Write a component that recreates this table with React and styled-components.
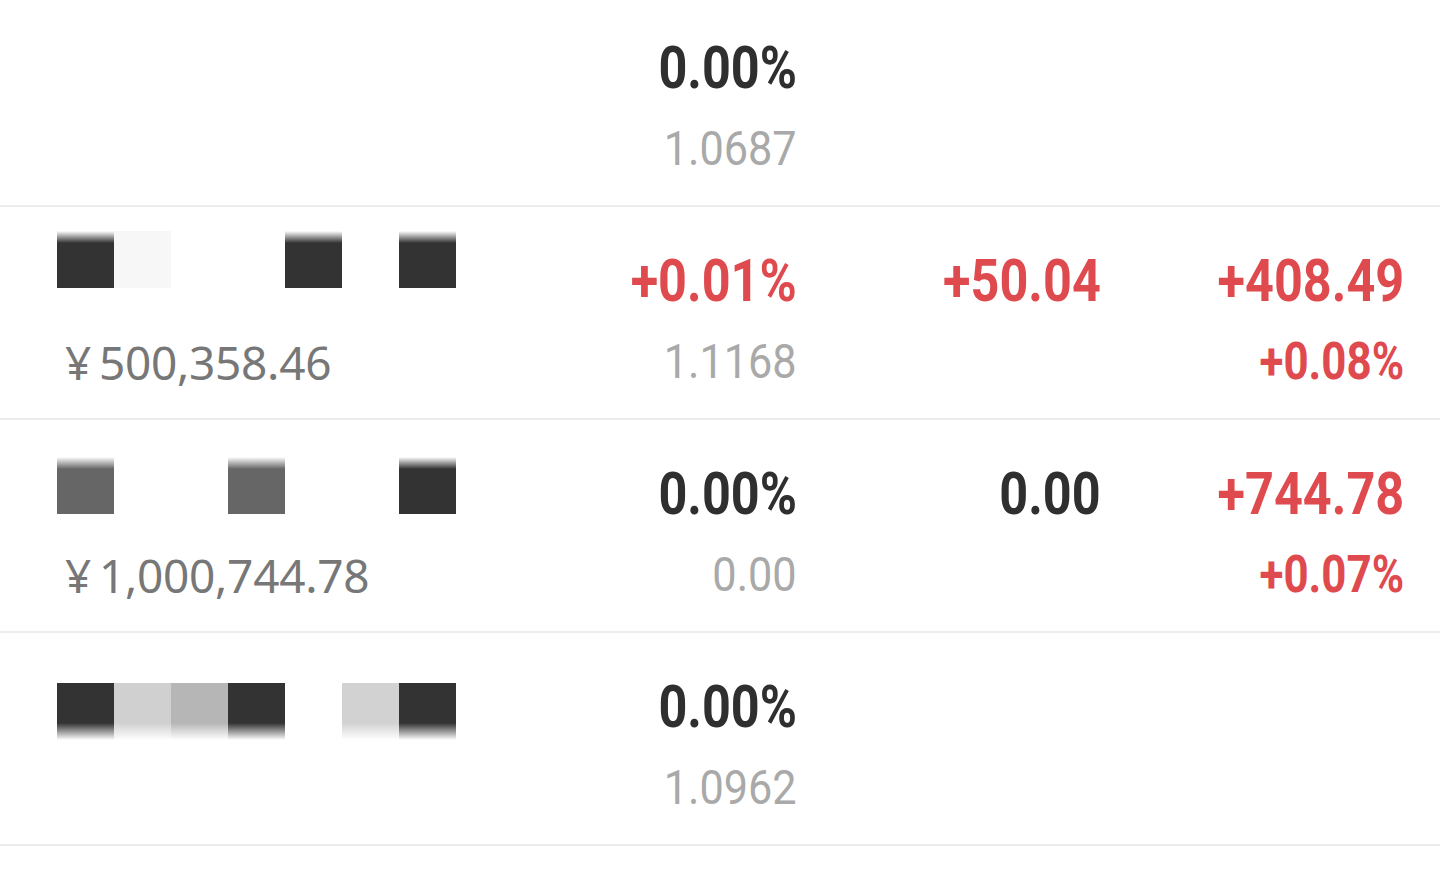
import * as React from "react";
import styled, { createGlobalStyle, css } from "styled-components";

const RED = "#df4a4f";
const DARK = "#2f2f2f";

const funds = [
  {
    name: [],
    amount: null,
    shift: 0,
    daily: { main: "0.00%", sub: "1.0687", tone: "dark", subTone: "gray" },
    profit: null,
    hold: null,
  },
  {
    name: [
      { c: "#333", fade: "top" },
      { c: "#f7f7f7" },
      null,
      null,
      { c: "#333", fade: "top" },
      null,
      { c: "#333", fade: "top" },
    ],
    amount: "500,358.46",
    shift: -20,
    daily: { main: "+0.01%", sub: "1.1168", tone: "red", subTone: "gray" },
    profit: { main: "+50.04", tone: "red" },
    hold: { main: "+408.49", sub: "+0.08%", tone: "red", subTone: "red" },
  },
  {
    name: [
      { c: "#666", fade: "top" },
      null,
      null,
      { c: "#666", fade: "top" },
      null,
      null,
      { c: "#333", fade: "top" },
    ],
    amount: "1,000,744.78",
    shift: -7,
    daily: { main: "0.00%", sub: "0.00", tone: "dark", subTone: "gray" },
    profit: { main: "0.00", tone: "dark" },
    hold: { main: "+744.78", sub: "+0.07%", tone: "red", subTone: "red" },
  },
  {
    name: [
      { c: "#333", fade: "bottom" },
      { c: "#d0d0d0", fade: "bottom" },
      { c: "#b6b6b6", fade: "bottom" },
      { c: "#333", fade: "bottom" },
      null,
      { c: "#d2d2d2", fade: "bottom" },
      { c: "#333", fade: "bottom" },
    ],
    amount: null,
    shift: 6,
    daily: { main: "0.00%", sub: "1.0962", tone: "dark", subTone: "gray" },
    profit: null,
    hold: null,
  },
];

function ValueCell({ data }) {
  if (!data) return <Cell />;
  return (
    <Cell>
      <MainLine>
        <MainValue $tone={data.tone}>{data.main}</MainValue>
      </MainLine>
      {data.sub && (
        <SubLine>
          {data.subTone === "red" ? (
            <SubRed>{data.sub}</SubRed>
          ) : (
            <SubGray>{data.sub}</SubGray>
          )}
        </SubLine>
      )}
    </Cell>
  );
}

export default function App() {
  return (
    <>
      <GlobalStyle />
      <List>
        {funds.map((f, i) => (
          <Row key={i}>
            <NameCell>
              <MainLine>
                <Mosaic $shift={f.shift}>
                  {f.name.map((b, j) =>
                    b ? <Tile key={j} $color={b.c} $fade={b.fade} /> : <Tile key={j} />
                  )}
                </Mosaic>
              </MainLine>
              {f.amount && (
                <SubLine>
                  <Amount>
                    <Yen>¥</Yen>
                    {f.amount}
                  </Amount>
                </SubLine>
              )}
            </NameCell>
            <ValueCell data={f.daily} />
            <ValueCell data={f.profit} />
            <ValueCell data={f.hold} />
          </Row>
        ))}
      </List>
    </>
  );
}

const GlobalStyle = createGlobalStyle`
  html, body {
    margin: 0;
    padding: 0;
    background: #ffffff;
    overflow: hidden;
  }
  body {
    font-family: Roboto, "Noto Sans", "Noto Sans CJK SC", sans-serif;
  }
`;

const List = styled.div`
  display: flex;
  flex-direction: column;
  margin-top: -6px;
`;

const Row = styled.div`
  display: grid;
  grid-template-columns: 1fr 304px 304px 303px;
  height: 211px;
  padding: 0 36px 0 57px;
  border-bottom: 2px solid #ececec;
`;

const Cell = styled.div`
  display: flex;
  flex-direction: column;
  align-items: flex-end;
  padding-top: 44px;
`;

const NameCell = styled(Cell)`
  align-items: flex-start;
`;

const MainLine = styled.div`
  height: 60px;
  display: flex;
  align-items: flex-start;
`;

const SubLine = styled.div`
  height: 48px;
  margin-top: 27px;
  display: flex;
`;

const condensed = css`
  display: inline-block;
  transform-origin: right center;
  white-space: nowrap;
`;

const MainValue = styled.span`
  ${condensed};
  font-family: Roboto, "DejaVu Sans", sans-serif;
  font-weight: 700;
  font-size: 60px;
  line-height: 60px;
  transform: scaleX(0.84);
  color: ${(p) => (p.$tone === "red" ? RED : DARK)};
`;

const SubGray = styled.span`
  ${condensed};
  font-family: Roboto, sans-serif;
  font-weight: 400;
  font-size: 48px;
  line-height: 48px;
  transform: scaleX(0.9);
  color: #a9a9a9;
`;

const SubRed = styled.span`
  ${condensed};
  font-family: Roboto, sans-serif;
  font-weight: 700;
  font-size: 51px;
  line-height: 48px;
  transform: scaleX(0.86);
  color: ${RED};
`;

const Amount = styled.span`
  font-family: "Noto Sans", sans-serif;
  font-weight: 400;
  font-size: 46px;
  line-height: 48px;
  letter-spacing: -0.3px;
  margin-left: 8px;
  color: #777777;
  white-space: nowrap;
`;

const Yen = styled.span`
  margin-right: 8px;
`;

const Mosaic = styled.div`
  display: flex;
  transform: translateY(${(p) => p.$shift}px);
`;

const Tile = styled.div`
  width: 57px;
  height: 57px;
  background: ${(p) => {
    if (!p.$color) return "transparent";
    if (p.$fade === "top")
      return `linear-gradient(to bottom, rgba(255,255,255,0) 0, ${p.$color} 12px, ${p.$color} 100%)`;
    if (p.$fade === "bottom")
      return `linear-gradient(to bottom, ${p.$color} 0, ${p.$color} 40px, rgba(255,255,255,0) 100%)`;
    return p.$color;
  }};
`;
